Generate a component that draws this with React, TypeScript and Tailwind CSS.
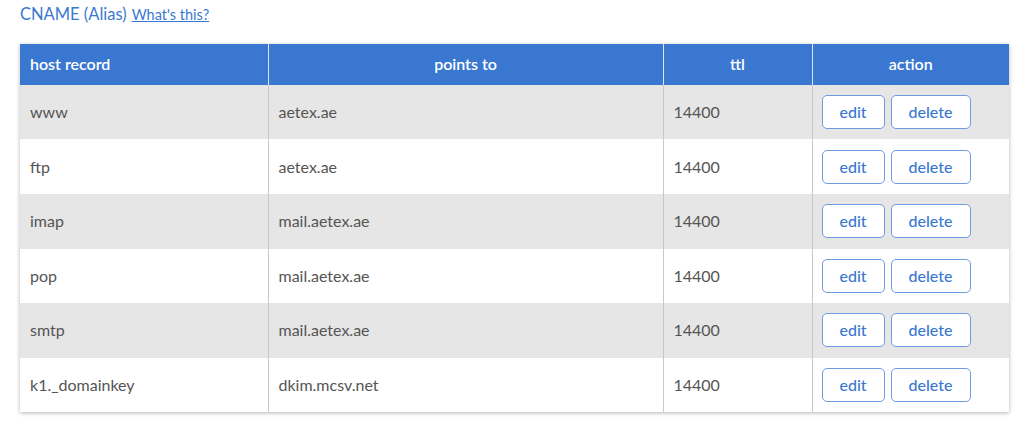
import React from 'react';

interface CnameRecord {
  host: string;
  target: string;
  ttl: number;
}

const records: CnameRecord[] = [
  { host: 'www', target: 'aetex.ae', ttl: 14400 },
  { host: 'ftp', target: 'aetex.ae', ttl: 14400 },
  { host: 'imap', target: 'mail.aetex.ae', ttl: 14400 },
  { host: 'pop', target: 'mail.aetex.ae', ttl: 14400 },
  { host: 'smtp', target: 'mail.aetex.ae', ttl: 14400 },
  { host: 'k1._domainkey', target: 'dkim.mcsv.net', ttl: 14400 },
];

function App() {
  return (
    <div className="min-h-[438px] bg-white px-5 pt-[3px] font-['Lato','Open_Sans',sans-serif]">
      <div className="flex items-baseline gap-[5px]">
        <h2 className="text-[16.5px] leading-[22px] text-[#3a78d0]">CNAME (Alias)</h2>
        <a href="#" className="text-[14.5px] text-[#3a78d0] underline">What's this?</a>
      </div>

      <div className="mt-[18px] w-[989px] shadow-[0_1px_4px_rgba(0,0,0,0.3)]">
        <table className="w-full table-fixed border-collapse">
          <thead>
            <tr className="h-[41px] bg-[#3a77d0] text-[16px] font-semibold text-white">
              <th className="w-[248px] px-[10px] text-left font-semibold">host record</th>
              <th className="w-[395px] border-l border-[#dbe6f6] font-semibold">points to</th>
              <th className="w-[149px] border-l border-[#dbe6f6] font-semibold">ttl</th>
              <th className="border-l border-[#dbe6f6] font-semibold">action</th>
            </tr>
          </thead>
          <tbody>
            {records.map((record, index) => (
              <tr
                key={record.host}
                className={`h-[54.6px] text-[16px] text-[#555] ${index % 2 === 0 ? 'bg-[#e6e6e6]' : 'bg-white'}`}
              >
                <td className="px-[10px]">{record.host}</td>
                <td className="border-l border-[#c8c8c8] px-[10px]">{record.target}</td>
                <td className="border-l border-[#c8c8c8] px-[10px]">{record.ttl}</td>
                <td className="border-l border-[#c8c8c8] pl-[9px]">
                  <span className="flex items-center gap-[6px]">
                    <button className="h-[34px] w-[63px] rounded-[5px] border border-[#6f9be0] bg-white text-[16px] font-medium text-[#3a78d0]">
                      edit
                    </button>
                    <button className="h-[34px] w-[80px] rounded-[5px] border border-[#6f9be0] bg-white text-[16px] font-medium text-[#3a78d0]">
                      delete
                    </button>
                  </span>
                </td>
              </tr>
            ))}
          </tbody>
        </table>
      </div>
    </div>
  );
}

export default App;
